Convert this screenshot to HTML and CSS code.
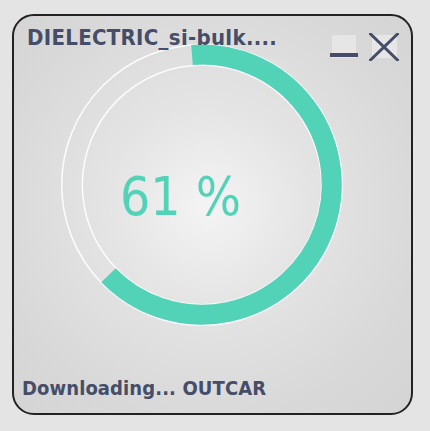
FILE: index.html
```html
<!DOCTYPE html>
<html>
<head>
<meta charset="utf-8">
<link rel="stylesheet" href="styles.css">
</head>
<body>
<div class="window">
  <div class="stage">
    <svg class="ring" width="300" height="300" viewBox="0 0 300 300">
      <circle class="track" cx="150" cy="150" r="140.3"/>
      <circle class="track" cx="150" cy="150" r="119.7"/>
      <path class="arc" d="M 140 20 A 130 130 0 1 1 56.5 240.2"/>
      <text class="pct" x="128.5" y="180" text-anchor="middle">61 %</text>
    </svg>
    <div class="header">
      <div class="title">DIELECTRIC_si-bulk....</div>
      <div class="controls">
        <button class="btn min" aria-label="minimize">
          <svg width="28" height="24" viewBox="0 0 28 24"><rect class="pad" x="2" y="0" width="24" height="23"/><rect class="bar" x="0" y="18" width="28" height="4"/></svg>
        </button>
        <button class="btn close" aria-label="close">
          <svg width="30" height="28" viewBox="0 0 30 28"><rect class="pad" x="3" y="2" width="25" height="23"/><path class="x" d="M1.5 1 L28.5 27 M28.5 1 L1.5 27"/></svg>
        </button>
      </div>
    </div>
  </div>
  <div class="footer">Downloading... OUTCAR</div>
</div>
</body>
</html>
```
FILE: styles.css
```css
html, body {
  margin: 0;
  padding: 0;
  background: #e4e4e4;
}
body {
  width: 430px;
  height: 431px;
  overflow: hidden;
}
.window {
  box-sizing: border-box;
  width: 401px;
  height: 401px;
  margin: 14px 0 0 12px;
  border: 2px solid #222;
  border-radius: 22px;
  background: radial-gradient(circle at 49% 48%, #f4f4f4 0%, #e4e4e4 35%, #d8d8d8 75%, #d4d4d4 100%);
  display: grid;
  grid-template-rows: 1fr auto;
  overflow: hidden;
  font-family: "DejaVu Sans Condensed", "DejaVu Sans", Verdana, sans-serif;
  font-stretch: condensed;
  color: #454d68;
}
.stage {
  display: grid;
}
.stage > * {
  grid-area: 1 / 1;
}
.ring {
  margin: 19px 0 0 38px;
  align-self: start;
  justify-self: start;
}
.track {
  fill: none;
  stroke: rgba(255, 255, 255, 0.9);
  stroke-width: 1.5;
}
.arc {
  fill: none;
  stroke: #52d3b7;
  stroke-width: 20;
}
.pct {
  font-family: "DejaVu Sans Condensed", "DejaVu Sans", Verdana, sans-serif;
  font-stretch: condensed;
  font-size: 53px;
  fill: #52d3b7;
}
.header {
  align-self: start;
  display: flex;
  justify-content: space-between;
  align-items: flex-start;
  padding: 9px 12px 0 13px;
}
.title {
  font-weight: bold;
  font-size: 22px;
  line-height: 26px;
  letter-spacing: 0.3px;
}
.controls {
  display: flex;
  align-items: flex-start;
  gap: 11px;
  margin-top: 8px;
}
.btn {
  border: 0;
  padding: 0;
  margin: 0;
  background: none;
  display: block;
}
.btn.min {
  margin-top: 2px;
}
.btn svg {
  display: block;
}
.pad {
  fill: #e6e6e6;
}
.bar {
  fill: #454d68;
}
.x {
  stroke: #454d68;
  stroke-width: 3;
  stroke-linecap: round;
  fill: none;
}
.footer {
  font-weight: bold;
  font-size: 20px;
  line-height: 24px;
  letter-spacing: 0.1px;
  padding: 0 0 13px 8px;
}
```
